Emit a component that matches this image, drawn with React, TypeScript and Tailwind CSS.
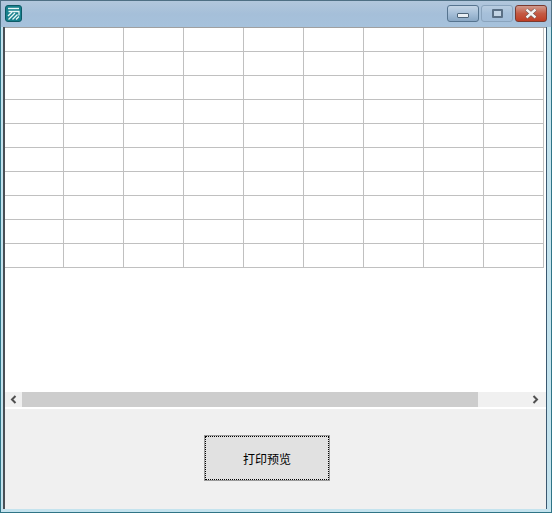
const rows = Array.from({ length: 10 }, (_, i) => i);
const cols = Array.from({ length: 9 }, (_, i) => i);

function AppIcon() {
  return (
    <svg width="17" height="17" viewBox="0 0 17 17" className="block">
      <rect x="0.5" y="0.5" width="16" height="16" rx="2.5" fill="#17808c" stroke="#0d5a66" />
      <path d="M3 3.5H14" stroke="#eaf8f8" strokeWidth="1.4" fill="none" />
      <path d="M3.5 6.5H14V10.5" stroke="#eaf8f8" strokeWidth="1.3" fill="none" />
      <path d="M3 11L7 7M3.5 14.5L10 8M7.5 14.5L12.5 9.5M11 14.5L14 11.5" stroke="#eaf8f8" strokeWidth="1.4" fill="none" />
    </svg>
  );
}

function Chevron({ dir }: { dir: "left" | "right" }) {
  return (
    <svg width="7" height="9" viewBox="0 0 7 9" className="block">
      <path d={dir === "left" ? "M5.5 1L2 4.5L5.5 8" : "M1.5 1L5 4.5L1.5 8"} stroke="#505050" strokeWidth="2" fill="none" />
    </svg>
  );
}

export default function App() {
  return (
    <div className="w-[552px] h-[513px] flex flex-col overflow-hidden bg-[#c4e3ee] font-['Liberation_Sans','Noto_Sans_CJK_SC',sans-serif]">
      {/* TITLE BAR */}
      <div className="h-[27px] shrink-0 flex items-start justify-between border-t border-x border-[#4f7084] bg-gradient-to-b from-[#b2c7dc] via-[#a5bfd9] to-[#a6c2dc]">
        <div className="pl-[4px] pt-[4px]">
          <AppIcon />
        </div>
        <div className="flex mr-[4px] pt-[4px] gap-[2px]">
          <div className="w-[32px] h-[17px] rounded-[3px] border border-[#56748f] bg-gradient-to-b from-[#c4d5e5] via-[#a6bfd8] to-[#89a7c4] flex items-end justify-center pb-[3px]">
            <div className="w-[12px] h-[5px] bg-[#e8eef4] border border-[#4d6478] rounded-[1px]" />
          </div>
          <div className="w-[32px] h-[17px] rounded-[3px] border border-[#8aa4bd] bg-gradient-to-b from-[#b9cde0] via-[#a6c0da] to-[#a2bdd8] flex items-center justify-center">
            <div className="w-[11px] h-[9px] border-2 border-[#5a6f84] bg-[#c3d4e4] rounded-[1px]" />
          </div>
          <div className="w-[32px] h-[17px] rounded-[3px] border border-[#7a3a30] bg-gradient-to-b from-[#d09a8e] via-[#c45a44] to-[#bf3d24] flex items-center justify-center">
            <svg width="14" height="11" viewBox="0 0 14 11" className="block">
              <path d="M2.5 1.5L11.5 9.5M11.5 1.5L2.5 9.5" stroke="#5b4a48" strokeWidth="3.6" fill="none" />
              <path d="M2.5 1.5L11.5 9.5M11.5 1.5L2.5 9.5" stroke="#f4f4f4" strokeWidth="2.4" fill="none" />
            </svg>
          </div>
        </div>
      </div>

      <div className="flex-1 min-h-0 flex pl-[2px] pr-[4px] pb-[3px] border-x border-b border-[#2f7486]">
        <div className="flex-1 min-w-0 flex flex-col border-l-2 border-l-[#4a4f55] border-r border-r-[#3a5870] bg-white">
          {/* GRID */}
          <div className="h-[365px] shrink-0 border-t border-t-[#a0a0a0]">
            {rows.map((r) => (
              <div key={r} className="flex h-[24px]">
                {cols.map((c) => (
                  <div
                    key={c}
                    className={c === 0 ? "w-[59px] h-[24px] border-r border-b border-[#c0c0c0]" : "w-[60px] h-[24px] border-r border-b border-[#c0c0c0]"}
                  />
                ))}
              </div>
            ))}
          </div>

          {/* SCROLLBAR */}
          <div className="h-[15px] shrink-0 flex bg-[#f0f0f0]">
            <div className="w-[17px] flex items-center justify-center">
              <Chevron dir="left" />
            </div>
            <div className="w-[456px] bg-[#cdcdcd]" />
            <div className="flex-1" />
            <div className="w-[17px] mr-[2px] flex items-center justify-center">
              <Chevron dir="right" />
            </div>
          </div>

          {/* BOTTOM PANEL */}
          <div className="flex-1 border-t-2 border-t-white bg-[#f0f0f0] flex justify-center pt-[26px] pr-[17px]">
            <button className="w-[126px] h-[46px] border border-[#9a9a9a] bg-[#e1e1e1]">
              <div className="w-full h-full border border-dotted border-black flex items-center justify-center pt-[4px] text-[12px] text-black">
                打印预览
              </div>
            </button>
          </div>
        </div>
      </div>
    </div>
  );
}
